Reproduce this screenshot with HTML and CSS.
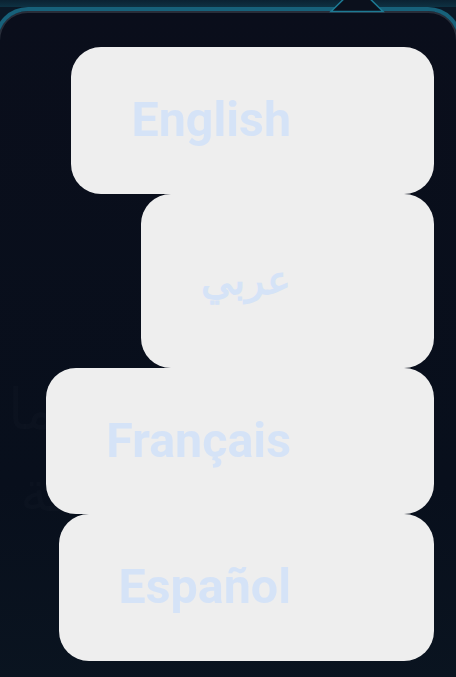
FILE: index.html
```html
<!DOCTYPE html>
<html lang="en">
<head>
<meta charset="utf-8">
<link rel="stylesheet" href="styles.css">
</head>
<body>
<div class="topbar">
  <svg class="caret" width="58" height="14" viewBox="0 0 58 14"><polygon points="3,11.5 29,-14 55,11.5" fill="#0b101c" stroke="#1d7a94" stroke-width="1.5"/></svg>
</div>
<div class="panel">
  <div class="ghost">
    <span class="g1">لما</span>
    <span class="g2">قة</span>
  </div>
  <ul class="langs">
    <li class="lang">English</li>
    <li class="lang ar" lang="ar">عربي</li>
    <li class="lang">Français</li>
    <li class="lang">Español</li>
  </ul>
</div>
</body>
</html>
```
FILE: styles.css
```css
html, body {
  margin: 0;
  padding: 0;
  height: 100%;
}
body {
  background: #0b1826;
  font-family: Roboto, "Noto Sans", sans-serif;
  overflow: hidden;
  position: relative;
}
.topbar {
  height: 7px;
  background: linear-gradient(#0b2232, #0e3142);
  position: relative;
  z-index: 2;
}
.caret {
  position: absolute;
  left: 328px;
  top: 0;
}
.panel {
  position: relative;
  margin: 0 -6px;
  height: 680px;
  border-top: 4px solid #17617a;
  border-left: 4px solid #17617a;
  border-right: 4px solid #17617a;
  border-radius: 34px 34px 0 0;
  background: linear-gradient(180deg, #0a0e1b 0%, #080f1c 70%, #0a1420 100%);
  box-shadow: inset 0 2px 0 #282e3a, inset 2px 0 0 #282e3a, inset -2px 0 0 #282e3a;
  padding-top: 36px;
  box-sizing: border-box;
}
.ghost {
  position: absolute;
  left: 4px;
  top: 0;
  width: 100%;
  color: rgba(255,255,255,0.014);
  font-size: 56px;
  font-family: "DejaVu Sans", sans-serif;
}
.ghost .g1 { position: absolute; left: 6px; top: 366px; }
.ghost .g2 { position: absolute; left: 18px; top: 448px; }
.langs {
  list-style: none;
  margin: 0;
  padding: 0 24px 0 0;
  display: flex;
  flex-direction: column;
  align-items: flex-end;
  position: relative;
}
.lang {
  background: #eeeeee;
  border-radius: 30px;
  color: #d5e3f7;
  font-weight: 700;
  font-size: 48.4px;
  line-height: 56.6px;
  padding: 45px 143px 45px 60px;
}
.lang.ar {
  font-size: 40px;
  line-height: 84px;
}
```
